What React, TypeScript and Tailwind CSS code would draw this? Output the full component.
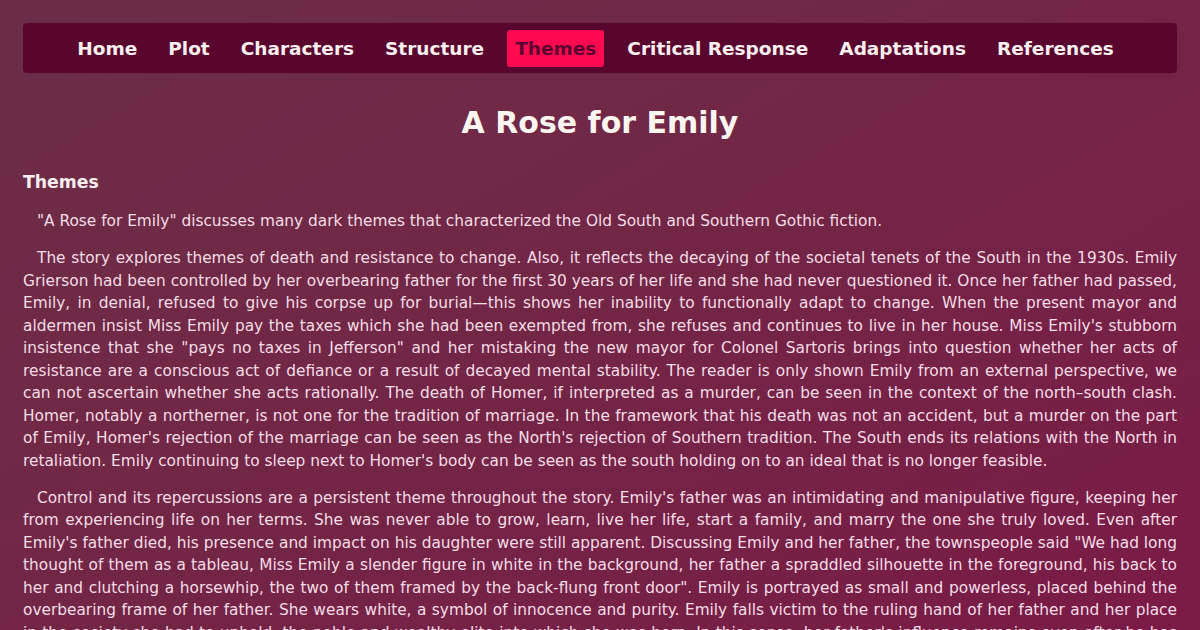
const navItems = [
  "Home",
  "Plot",
  "Characters",
  "Structure",
  "Themes",
  "Critical Response",
  "Adaptations",
  "References",
];

const paragraphs = [
  '"A Rose for Emily" discusses many dark themes that characterized the Old South and Southern Gothic fiction.',
  'The story explores themes of death and resistance to change. Also, it reflects the decaying of the societal tenets of the South in the 1930s. Emily Grierson had been controlled by her overbearing father for the first 30 years of her life and she had never questioned it. Once her father had passed, Emily, in denial, refused to give his corpse up for burial\u2014this shows her inability to functionally adapt to change. When the present mayor and aldermen insist Miss Emily pay the taxes which she had been exempted from, she refuses and continues to live in her house. Miss Emily\'s stubborn insistence that she "pays no taxes in Jefferson" and her mistaking the new mayor for Colonel Sartoris brings into question whether her acts of resistance are a conscious act of defiance or a result of decayed mental stability. The reader is only shown Emily from an external perspective, we can not ascertain whether she acts rationally. The death of Homer, if interpreted as a murder, can be seen in the context of the north\u2013south clash. Homer, notably a northerner, is not one for the tradition of marriage. In the framework that his death was not an accident, but a murder on the part of Emily, Homer\'s rejection of the marriage can be seen as the North\'s rejection of Southern tradition. The South ends its relations with the North in retaliation. Emily continuing to sleep next to Homer\'s body can be seen as the south holding on to an ideal that is no longer feasible.',
  'Control and its repercussions are a persistent theme throughout the story. Emily\'s father was an intimidating and manipulative figure, keeping her from experiencing life on her terms. She was never able to grow, learn, live her life, start a family, and marry the one she truly loved. Even after Emily\'s father died, his presence and impact on his daughter were still apparent. Discussing Emily and her father, the townspeople said "We had long thought of them as a tableau, Miss Emily a slender figure in white in the background, her father a spraddled silhouette in the foreground, his back to her and clutching a horsewhip, the two of them framed by the back-flung front door". Emily is portrayed as small and powerless, placed behind the overbearing frame of her father. She wears white, a symbol of innocence and purity. Emily falls victim to the ruling hand of her father and her place in the society she had to uphold, the noble and wealthy elite into which she was born. In this sense, her father\'s influence remains even after he has passed. This is shown when she refuses to let go of his body.',
];

export default function App() {
  return (
    <div className="min-h-[630px] bg-gradient-to-br from-[#6b2e46] to-[#7b1946] p-[23px] font-['DejaVu_Sans',sans-serif] text-[#f4dde6]">
      {/* Top navigation */}
      <nav className="flex items-center justify-center gap-[15px] rounded-[4px] bg-[#59062f] py-[6.5px] pr-[9px]">
        {navItems.map((item) => (
          <a
            key={item}
            className={`rounded-[3px] px-2 py-[7px] text-[18.5px] font-bold leading-[23px] ${
              item === "Themes" ? "bg-[#ff0a50] text-[#5a0630]" : "text-[#fcefef]"
            }`}
          >
            {item}
          </a>
        ))}
      </nav>

      <h1 className="mt-[31px] text-center text-[30px] font-bold leading-[38px] text-[#fdf5f0]">
        A Rose for Emily
      </h1>

      <h2 className="mt-[28px] text-[17.3px] font-bold leading-[24px] text-[#fbeef0]">Themes</h2>

      <div className="mt-[16px] space-y-[14.5px]">
        {paragraphs.map((p, i) => (
          <p key={i} className="indent-[14px] text-justify text-[15.36px] leading-[22.5px]">
            {p}
          </p>
        ))}
      </div>
    </div>
  );
}
